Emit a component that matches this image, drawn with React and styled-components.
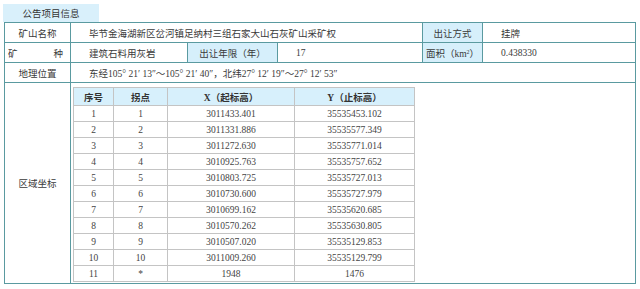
import React from "react";
import styled, { createGlobalStyle } from "styled-components";

const GlobalStyle = createGlobalStyle`
  html, body {
    margin: 0;
    padding: 0;
    background: #fff;
  }
  body {
    font-family: "Liberation Serif", "Noto Sans CJK SC", serif;
    font-size: 9.5px;
    color: #3a3a3a;
  }
`;

const Page = styled.div`
  width: 640px;
  height: 289px;
  padding: 4px 0 0 0;
  box-sizing: border-box;
`;

const TabTitle = styled.div`
  margin-left: 3px;
  width: 96px;
  height: 18px;
  background: #d9f0fb;
  display: flex;
  align-items: center;
  justify-content: center;
  font-family: "Noto Sans CJK SC", sans-serif;
  font-size: 9.5px;
  color: #333;
`;

const InfoTable = styled.table`
  margin-left: 4px;
  width: 631px;
  border-collapse: collapse;
  table-layout: fixed;
  border: 1px solid #5a9aa0;
`;

const Cell = styled.td`
  border: 1px solid #5a9aa0;
  height: 19px;
  padding: 0 0 0 ${(p) => (p.$value ? "18px" : "0")};
  text-align: ${(p) => (p.$value ? "left" : "center")};
  vertical-align: middle;
  background: ${(p) => (p.$shade ? "#d6effb" : "#fff")};
  white-space: nowrap;
  overflow: hidden;
`;

const GridCell = styled.td`
  border: 1px solid #5a9aa0;
  padding: 4px 0 1px 2px;
  vertical-align: top;
`;

const Spread = styled.span`
  display: flex;
  justify-content: space-between;
  padding: 0 7px 0 3px;
`;

const Sup = styled.sup`
  font-size: 6px;
  vertical-align: 3px;
`;

const CoordTable = styled.table`
  width: 341px;
  border-collapse: collapse;
  table-layout: fixed;
  border: 1px solid #b5b5b5;
`;

const HeadCell = styled.th`
  height: 17px;
  padding: 0;
  background: #d7f0fc;
  border: 1px solid #c4c4c4;
  font-weight: bold;
  color: #333;
  text-align: center;
`;

const DataCell = styled.td`
  height: 15px;
  padding: 0;
  border: 1px solid #c4c4c4;
  text-align: center;
  color: #444;
`;

const points = [
  ["1", "1", "3011433.401", "35535453.102"],
  ["2", "2", "3011331.886", "35535577.349"],
  ["3", "3", "3011272.630", "35535771.014"],
  ["4", "4", "3010925.763", "35535757.652"],
  ["5", "5", "3010803.725", "35535727.013"],
  ["6", "6", "3010730.600", "35535727.979"],
  ["7", "7", "3010699.162", "35535620.685"],
  ["8", "8", "3010570.262", "35535630.805"],
  ["9", "9", "3010507.020", "35535129.853"],
  ["10", "10", "3011009.260", "35535129.799"],
  ["11", "*", "1948", "1476"],
];

export default function App() {
  return (
    <Page>
      <GlobalStyle />
      <TabTitle>公告项目信息</TabTitle>
      <InfoTable>
        <colgroup>
          <col style={{ width: 66 }} />
          <col style={{ width: 117 }} />
          <col style={{ width: 90 }} />
          <col style={{ width: 145 }} />
          <col style={{ width: 60 }} />
          <col style={{ width: 153 }} />
        </colgroup>
        <tbody>
          <tr>
            <Cell>矿山名称</Cell>
            <Cell $value colSpan={3}>
              毕节金海湖新区岔河镇足纳村三组石家大山石灰矿山采矿权
            </Cell>
            <Cell $shade>出让方式</Cell>
            <Cell $value>挂牌</Cell>
          </tr>
          <tr>
            <Cell>
              <Spread>
                <span>矿</span>
                <span>种</span>
              </Spread>
            </Cell>
            <Cell $value>建筑石料用灰岩</Cell>
            <Cell $shade>出让年限（年）</Cell>
            <Cell $value>17</Cell>
            <Cell $shade>
              面积（km<Sup>2</Sup>）
            </Cell>
            <Cell $value>0.438330</Cell>
          </tr>
          <tr>
            <Cell>地理位置</Cell>
            <Cell $value colSpan={5}>
              东经105° 21′ 13″～105° 21′ 40″，北纬27° 12′ 19″～27° 12′ 53″
            </Cell>
          </tr>
          <tr>
            <Cell>区域坐标</Cell>
            <GridCell colSpan={5}>
              <CoordTable>
                <colgroup>
                  <col style={{ width: 40 }} />
                  <col style={{ width: 54 }} />
                  <col style={{ width: 127 }} />
                  <col style={{ width: 120 }} />
                </colgroup>
                <thead>
                  <tr>
                    <HeadCell>序号</HeadCell>
                    <HeadCell>拐点</HeadCell>
                    <HeadCell>X（起标高）</HeadCell>
                    <HeadCell>Y（止标高）</HeadCell>
                  </tr>
                </thead>
                <tbody>
                  {points.map(([n, p, x, y]) => (
                    <tr key={n}>
                      <DataCell>{n}</DataCell>
                      <DataCell>{p}</DataCell>
                      <DataCell>{x}</DataCell>
                      <DataCell>{y}</DataCell>
                    </tr>
                  ))}
                </tbody>
              </CoordTable>
            </GridCell>
          </tr>
        </tbody>
      </InfoTable>
    </Page>
  );
}
